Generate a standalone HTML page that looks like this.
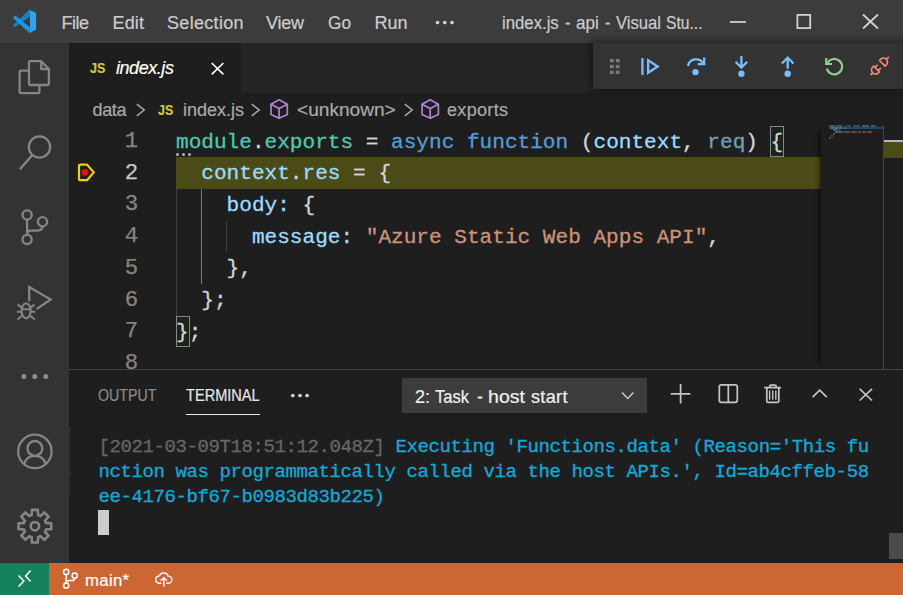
<!DOCTYPE html>
<html lang="en">
<head>
<meta charset="utf-8">
<title>index.js - api - Visual Studio Code</title>
<style>
html,body{margin:0;padding:0;}
body{width:903px;height:595px;overflow:hidden;background:#1e1e1e;position:relative;font-family:"Liberation Sans",sans-serif;}
.abs{position:absolute;}
.t{position:absolute;white-space:pre;transform-origin:0 50%;-webkit-text-stroke:0.2px;}
#titlebar{left:0;top:0;width:903px;height:43px;background:#3c3c3c;}
#activity{left:0;top:43px;width:69px;height:520px;background:#333333;}
#tabs{left:69px;top:43px;width:834px;height:50px;background:#252526;}
#tab1{left:69px;top:43px;width:171.5px;height:50.5px;background:#1e1e1e;}
#editor{left:69px;top:93px;width:834px;height:276px;background:#1e1e1e;overflow:hidden;}
#hl{left:176px;top:157px;width:645px;height:31.8px;background:#4b4b18;}
.ln{-webkit-text-stroke:0.25px;position:absolute;left:69px;width:69.3px;margin-top:-0.4px;text-align:right;font-family:"Liberation Mono",monospace;font-size:22.4px;line-height:31.68px;height:31.68px;color:#858585;white-space:pre;}
.cl{-webkit-text-stroke:0.3px;position:absolute;left:176px;font-family:"Liberation Mono",monospace;font-size:21.08px;line-height:31.68px;height:31.68px;color:#d4d4d4;white-space:pre;}
.k{color:#569cd6}.v{color:#9cdcfe}.c{color:#4ec9b0}.s{color:#ce9178}
#panelborder{left:69px;top:369px;width:834px;height:1px;background:#424242;}
#panel{left:69px;top:370px;width:834px;height:193px;background:#1e1e1e;}
#dropdown{left:402px;top:378.3px;width:244.8px;height:34.5px;background:#3c3c3c;}
#termul{left:186px;top:413.7px;width:74px;height:1.1px;background:#e7e7e7;}
.tl{-webkit-text-stroke:0.3px;letter-spacing:-0.4px;position:absolute;left:98.5px;font-family:"Liberation Mono",monospace;font-size:19px;line-height:25px;height:25px;white-space:pre;color:#13a9d9;}
.g{color:#666666}
#cursor{left:98px;top:510px;width:11px;height:25px;background:#cccccc;}
#status{left:0;top:563px;width:903px;height:32px;background:#cc6633;}
#remote{left:0;top:563px;width:48.7px;height:32px;background:#16825d;}
#dbg{left:593px;top:43px;width:310px;height:45.5px;background:#333333;box-shadow:0 0 8px 2px rgba(0,0,0,0.45);}
#minimap{left:821px;top:125px;width:62px;height:244px;background:#1e1e1e;box-shadow:-6px 0 6px -6px #000;}
#ruler{left:883px;top:125px;width:20px;height:244px;border-left:1px solid #444444;box-sizing:border-box;}
</style>
</head>
<body>
<div class="abs" id="tabs"></div>
<div class="abs" id="tab1"></div>
<div class="abs" id="editor"></div>
<div class="abs" id="hl"></div>
<div class="abs" style="left:176px;top:188.86px;width:1px;height:126.72px;background:#404040"></div>
<div class="abs" style="left:201.1px;top:188.86px;width:1.2px;height:95.04px;background:#787878"></div>
<div class="abs" style="left:226px;top:220.54px;width:1px;height:31.68px;background:#404040"></div>
<div class="abs" style="left:770.4px;top:125.9px;width:11.4px;height:28.8px;border:1px solid #888;background:rgba(0,100,0,0.1)"></div>
<div class="abs" style="left:176.3px;top:315.88px;width:11.4px;height:28.8px;border:1px solid #888;background:rgba(0,100,0,0.1)"></div>
<div class="abs" style="left:175.9px;top:152.7px;width:3px;height:3px;border-radius:50%;background:#b4b4b4"></div>
<div class="abs" style="left:181.8px;top:152.7px;width:3px;height:3px;border-radius:50%;background:#b4b4b4"></div>
<div class="abs" style="left:187.6px;top:152.7px;width:3px;height:3px;border-radius:50%;background:#b4b4b4"></div>
<div class="ln" style="top:126.50px;color:#858585">1</div>
<div class="cl" style="top:126.50px"><span class="c">module</span>.<span class="c">exports</span> = <span class="k">async</span> <span class="k">function</span> (<span class="v">context</span>, <span class="v" style="opacity:0.67">req</span>) {</div>
<div class="ln" style="top:158.18px;color:#c6c6c6">2</div>
<div class="cl" style="top:158.18px">  <span class="v">context</span>.<span class="v">res</span> = {</div>
<div class="ln" style="top:189.86px;color:#858585">3</div>
<div class="cl" style="top:189.86px">    <span class="v">body</span><span class="v">:</span> {</div>
<div class="ln" style="top:221.54px;color:#858585">4</div>
<div class="cl" style="top:221.54px">      <span class="v">message</span><span class="v">:</span> <span class="s">"Azure Static Web Apps API"</span>,</div>
<div class="ln" style="top:253.22px;color:#858585">5</div>
<div class="cl" style="top:253.22px">    },</div>
<div class="ln" style="top:284.90px;color:#858585">6</div>
<div class="cl" style="top:284.90px">  };</div>
<div class="ln" style="top:316.58px;color:#858585">7</div>
<div class="cl" style="top:316.58px">};</div>
<div class="ln" style="top:348.26px;color:#858585">8</div>
<div class="abs" id="minimap"></div>
<div class="abs" style="left:829px;top:125.1px;width:6.0px;height:1.7px;background:#4ec9b0;opacity:0.38"></div>
<div class="abs" style="left:836px;top:125.1px;width:7.0px;height:1.7px;background:#4ec9b0;opacity:0.38"></div>
<div class="abs" style="left:844.5px;top:125.1px;width:1.0px;height:1.7px;background:#d4d4d4;opacity:0.27"></div>
<div class="abs" style="left:846.5px;top:125.1px;width:4.5px;height:1.7px;background:#569cd6;opacity:0.38"></div>
<div class="abs" style="left:852.5px;top:125.1px;width:7.5px;height:1.7px;background:#569cd6;opacity:0.38"></div>
<div class="abs" style="left:861.5px;top:125.1px;width:7.5px;height:1.7px;background:#9cdcfe;opacity:0.32"></div>
<div class="abs" style="left:871px;top:125.1px;width:3.5px;height:1.7px;background:#9cdcfe;opacity:0.32"></div>
<div class="abs" style="left:876px;top:125.1px;width:1.0px;height:1.7px;background:#d4d4d4;opacity:0.27"></div>
<div class="abs" style="left:829px;top:127px;width:53.5px;height:1.9px;background:#23466c;opacity:1"></div>
<div class="abs" style="left:831px;top:127.1px;width:7.0px;height:1.7px;background:#9cdcfe;opacity:0.27"></div>
<div class="abs" style="left:839px;top:127.1px;width:3.0px;height:1.7px;background:#9cdcfe;opacity:0.27"></div>
<div class="abs" style="left:843.5px;top:127.1px;width:2.5px;height:1.7px;background:#d4d4d4;opacity:0.22"></div>
<div class="abs" style="left:833px;top:129.2px;width:5.0px;height:1.7px;background:#9cdcfe;opacity:0.32"></div>
<div class="abs" style="left:839px;top:129.2px;width:1.0px;height:1.7px;background:#d4d4d4;opacity:0.27"></div>
<div class="abs" style="left:835px;top:131.1px;width:7.5px;height:1.7px;background:#9cdcfe;opacity:0.34"></div>
<div class="abs" style="left:844.2px;top:131.1px;width:5.8px;height:1.7px;background:#ce9178;opacity:0.36"></div>
<div class="abs" style="left:851px;top:131.1px;width:6.0px;height:1.7px;background:#ce9178;opacity:0.36"></div>
<div class="abs" style="left:858px;top:131.1px;width:3.0px;height:1.7px;background:#ce9178;opacity:0.36"></div>
<div class="abs" style="left:862px;top:131.1px;width:4.0px;height:1.7px;background:#ce9178;opacity:0.36"></div>
<div class="abs" style="left:867px;top:131.1px;width:4.5px;height:1.7px;background:#ce9178;opacity:0.36"></div>
<div class="abs" style="left:833px;top:133.2px;width:2.0px;height:1.7px;background:#d4d4d4;opacity:0.27"></div>
<div class="abs" style="left:831px;top:135.2px;width:2.0px;height:1.7px;background:#d4d4d4;opacity:0.27"></div>
<div class="abs" style="left:829px;top:137.2px;width:2.0px;height:1.7px;background:#d4d4d4;opacity:0.27"></div>
<div class="abs" id="ruler"></div>
<div class="abs" style="left:884px;top:140.3px;width:19px;height:1.8px;background:#b8b8b8"></div>
<div class="abs" style="left:884px;top:142px;width:19px;height:16px;background:#4b4b18"></div>
<div class="abs" id="panel"></div>
<div class="abs" id="panelborder"></div>
<div class="abs" id="dropdown"></div>
<div class="abs" id="termul"></div>
<div class="tl" style="top:434.5px"><span class="g">[2021-03-09T18:51:12.048Z]</span> Executing 'Functions.data' (Reason='This fu</div>
<div class="tl" style="top:459.5px">nction was programmatically called via the host APIs.', Id=ab4cffeb-58</div>
<div class="tl" style="top:484.5px">ee-4176-bf67-b0983d83b225)</div>
<div class="abs" id="cursor"></div>
<div class="abs" style="left:69px;top:427px;width:2px;height:69px;background:#272727"></div>
<div class="abs" style="left:69px;top:471.6px;width:2px;height:1.6px;background:#3e3e3e"></div>
<div class="abs" style="left:889px;top:532.5px;width:14px;height:26.5px;background:#4a4a4a"></div>
<div class="abs" id="titlebar"></div>
<div class="abs" id="dbg"></div>
<div class="abs" id="activity"></div>
<div class="abs" id="status"></div>
<div class="abs" id="remote"></div>
<span class="t" style="left:61.50px;top:10.90px;font-size:18px;line-height:25px;letter-spacing:-0.498px;color:#cccccc;">File</span>
<span class="t" style="left:112.50px;top:10.90px;font-size:18px;line-height:25px;letter-spacing:0.161px;color:#cccccc;">Edit</span>
<span class="t" style="left:167.00px;top:10.90px;font-size:18px;line-height:25px;letter-spacing:0.308px;color:#cccccc;">Selection</span>
<span class="t" style="left:266.00px;top:10.90px;font-size:18px;line-height:25px;letter-spacing:-0.230px;color:#cccccc;">View</span>
<span class="t" style="left:328.00px;top:10.90px;font-size:18px;line-height:25px;letter-spacing:0.000px;color:#cccccc;transform:scaleX(0.9583);">Go</span>
<span class="t" style="left:374.50px;top:10.90px;font-size:18px;line-height:25px;letter-spacing:-0.005px;color:#cccccc;">Run</span>
<span class="t" style="left:502.27px;top:10.90px;font-size:18px;line-height:25px;letter-spacing:0.000px;color:#cccccc;transform:scaleX(0.9295);">index.js</span>
<span class="t" style="left:564.70px;top:10.90px;font-size:18px;line-height:25px;letter-spacing:0.000px;color:#cccccc;transform:scaleX(0.9333);">-</span>
<span class="t" style="left:576.10px;top:10.90px;font-size:18px;line-height:25px;letter-spacing:0.000px;color:#cccccc;transform:scaleX(0.9469);">api</span>
<span class="t" style="left:604.90px;top:10.90px;font-size:18px;line-height:25px;letter-spacing:0.000px;color:#cccccc;transform:scaleX(0.9000);">-</span>
<span class="t" style="left:615.60px;top:10.90px;font-size:18px;line-height:25px;letter-spacing:0.000px;color:#cccccc;transform:scaleX(0.9245);">Visual</span>
<span class="t" style="left:665.50px;top:10.90px;font-size:18px;line-height:25px;letter-spacing:0.000px;color:#cccccc;transform:scaleX(0.8703);">Stu...</span>
<span class="t" style="left:90.10px;top:57.00px;font-size:15.4px;line-height:22px;letter-spacing:0.000px;color:#cbcb41;font-weight:bold;transform:scaleX(0.8136);">JS</span>
<span class="t" style="left:116.00px;top:56.20px;font-size:18px;line-height:25px;letter-spacing:-0.447px;color:#ffffff;font-style:italic;">index.js</span>
<span class="t" style="left:92.50px;top:98.30px;font-size:18px;line-height:25px;letter-spacing:-0.341px;color:#a9a9a9;">data</span>
<span class="t" style="left:158.00px;top:98.90px;font-size:15.4px;line-height:22px;letter-spacing:0.000px;color:#cbcb41;font-weight:bold;transform:scaleX(0.8082);">JS</span>
<span class="t" style="left:183.00px;top:98.30px;font-size:18px;line-height:25px;letter-spacing:-0.004px;color:#a9a9a9;">index.js</span>
<span class="t" style="left:296.80px;top:98.30px;font-size:18px;line-height:25px;letter-spacing:0.000px;color:#a9a9a9;transform:scaleX(1.0609);">&lt;unknown&gt;</span>
<span class="t" style="left:447.00px;top:98.30px;font-size:18px;line-height:25px;letter-spacing:0.329px;color:#a9a9a9;">exports</span>
<span class="t" style="left:98.20px;top:384.50px;font-size:15.6px;line-height:22px;letter-spacing:0.000px;color:#8b8b8b;transform:scaleX(0.9105);">OUTPUT</span>
<span class="t" style="left:186.00px;top:384.50px;font-size:15.6px;line-height:22px;letter-spacing:0.000px;color:#e7e7e7;transform:scaleX(0.9347);">TERMINAL</span>
<span class="t" style="left:415.00px;top:384.50px;font-size:18px;line-height:25px;letter-spacing:-0.111px;color:#f0f0f0;">2:</span>
<span class="t" style="left:434.90px;top:384.50px;font-size:18px;line-height:25px;letter-spacing:0.000px;color:#f0f0f0;transform:scaleX(0.9182);">Task</span>
<span class="t" style="left:476.80px;top:384.50px;font-size:18px;line-height:25px;letter-spacing:0.000px;color:#f0f0f0;transform:scaleX(0.9833);">-</span>
<span class="t" style="left:487.61px;top:384.50px;font-size:18px;line-height:25px;letter-spacing:0.000px;color:#f0f0f0;transform:scaleX(1.0872);">host</span>
<span class="t" style="left:531.00px;top:384.50px;font-size:18px;line-height:25px;letter-spacing:0.349px;color:#f0f0f0;">start</span>
<span class="t" style="left:85.00px;top:568.90px;font-size:16.8px;line-height:24px;letter-spacing:0.307px;color:#ffffff;">main*</span>
<svg class="abs" style="left:0;top:0" width="903" height="595" viewBox="0 0 903 595" fill="none">
<polygon points="29.3,9.8 29.9,16.4 15.0,27.3 12.9,25.2" fill="#1b7fc4"/>
<polygon points="15.0,15.6 29.9,27.0 29.5,33.0 12.9,17.8" fill="#2196e6"/>
<polygon points="29.3,9.8 36.1,13.1 36.1,29.7 29.5,33 29.9,27 29.9,16.4" fill="#2da4f2"/>
<circle cx="437.5" cy="22.5" r="1.85" fill="#d0d0d0"/>
<circle cx="444.8" cy="22.5" r="1.85" fill="#d0d0d0"/>
<circle cx="452.0" cy="22.5" r="1.85" fill="#d0d0d0"/>
<g stroke="#d0d0d0" stroke-width="1.8">
<path d="M730 22 H746"/>
<rect x="797.4" y="14.9" width="12.8" height="13.2"/>
<path d="M863 14.5 L878 28.5 M878 14.5 L863 28.5"/>
</g>
<g stroke="#858585" stroke-width="2.3" fill="none" stroke-linejoin="round" stroke-linecap="butt">
<path d="M30.2 61.2 H41.2 L48.9 69 V83.8 Q48.9 85 47.7 85 H30.2 Q29 85 29 83.8 V62.4 Q29 61.2 30.2 61.2 Z M41.2 61.2 V69 H48.9"/>
<path d="M29 70.6 H20.8 Q19.6 70.6 19.6 71.8 V92 Q19.6 93.2 20.8 93.2 H38.2 Q39.4 93.2 39.4 92 V85"/>
<circle cx="39.5" cy="147" r="10.65"/><path d="M32.3 154.9 L19.9 169.2"/>
<circle cx="27.1" cy="215" r="4.6"/><circle cx="27.1" cy="239.4" r="4.6"/><circle cx="42.5" cy="221.7" r="4.6"/>
<path d="M27.1 219.6 V234.8 M42.5 226.3 C42.5 229 40.5 230.6 37.5 230.6 H31 C28.5 230.6 27.1 232 27.1 234.8"/>
<path d="M29.2 301.2 V287 L50.6 299.6 L36.6 309" stroke-linejoin="miter"/>
</g>
<g stroke="#858585" stroke-width="2" fill="none">
<ellipse cx="26.1" cy="310.8" rx="4.5" ry="7.5"/>
<path d="M21.6 309.3 H30.6 M21.7 307.6 L17.6 304.4 M21.6 311.8 H16.8 M21.9 315.8 L17.4 319.6 M30.5 307.6 L34.6 304.4 M30.6 311.8 H35.4 M30.3 315.8 L34.8 319.6"/>
</g>
<circle cx="23.9" cy="376.5" r="2.5" fill="#8c8c8c"/>
<circle cx="34.8" cy="376.5" r="2.5" fill="#8c8c8c"/>
<circle cx="45.8" cy="376.5" r="2.5" fill="#8c8c8c"/>
<g stroke="#858585" stroke-width="2.3" fill="none">
<circle cx="34.9" cy="451.4" r="16.7"/><circle cx="34.9" cy="448.4" r="7.4"/>
<path d="M24.2 464 C25.6 459 29.8 455.9 34.9 455.9 C40 455.9 44.2 459 45.6 464"/>
<path d="M31.60 515.18 L32.05 509.85 L37.75 509.85 L38.20 515.18 L40.36 516.08 L44.45 512.62 L48.48 516.65 L45.02 520.74 L45.92 522.90 L51.25 523.35 L51.25 529.05 L45.92 529.50 L45.02 531.66 L48.48 535.75 L44.45 539.78 L40.36 536.32 L38.20 537.22 L37.75 542.55 L32.05 542.55 L31.60 537.22 L29.44 536.32 L25.35 539.78 L21.32 535.75 L24.78 531.66 L23.88 529.50 L18.55 529.05 L18.55 523.35 L23.88 522.90 L24.78 520.74 L21.32 516.65 L25.35 512.62 L29.44 516.08 Z" stroke-linejoin="miter" stroke-width="2.6"/>
<circle cx="34.9" cy="526.2" r="4.2" stroke-width="2.6"/>
</g>
<path d="M211.7 63 L223.4 74.3 M223.4 63 L211.7 74.3" stroke="#ffffff" stroke-width="1.6"/>
<path d="M136.8 104.2 L144.20000000000002 110 L136.8 115.8" stroke="#a9a9a9" stroke-width="1.5"/>
<path d="M251.8 104.2 L259.2 110 L251.8 115.8" stroke="#a9a9a9" stroke-width="1.5"/>
<path d="M404.8 104.2 L412.2 110 L404.8 115.8" stroke="#a9a9a9" stroke-width="1.5"/>
<g transform="translate(0 0)" stroke="#b180d7" stroke-width="1.7" stroke-linejoin="round"><path d="M279.1 99.8 L287.3 104.3 V114.4 L279.1 118.3 L271 114.4 V104.3 Z M271 104.3 L279.1 108.4 L287.3 104.3 M279.1 108.4 V118.3"/></g>
<g transform="translate(151.1 0)" stroke="#b180d7" stroke-width="1.7" stroke-linejoin="round"><path d="M279.1 99.8 L287.3 104.3 V114.4 L279.1 118.3 L271 114.4 V104.3 Z M271 104.3 L279.1 108.4 L287.3 104.3 M279.1 108.4 V118.3"/></g>
<path d="M80.5 164.6 H87 L93.8 172.4 L87 180.2 H80.5 Q79 180.2 79 178.7 V166.1 Q79 164.6 80.5 164.6 Z" stroke="#ffcc00" stroke-width="2.2" stroke-linejoin="round"/>
<circle cx="85.1" cy="172.4" r="3.3" fill="#e51400"/>
<rect x="609.9" y="59.0" width="3.8" height="3.3" fill="#7a7a7a"/>
<rect x="609.9" y="64.9" width="3.8" height="3.3" fill="#7a7a7a"/>
<rect x="609.9" y="70.7" width="3.8" height="3.3" fill="#7a7a7a"/>
<rect x="615.8" y="59.0" width="3.8" height="3.3" fill="#7a7a7a"/>
<rect x="615.8" y="64.9" width="3.8" height="3.3" fill="#7a7a7a"/>
<rect x="615.8" y="70.7" width="3.8" height="3.3" fill="#7a7a7a"/>
<g stroke="#75beff" stroke-width="2.3" fill="none">
<path d="M642.4 58 V74.9"/><path d="M648.1 60.3 L657.7 66.5 L648.1 72.8 Z" stroke-linejoin="miter"/>
<path d="M688 66 A8.3 8.3 0 0 1 703.4 63.6"/><path d="M704.2 57.5 V64.2 H697.7"/>
<path d="M741.4 56 V67.2 M735.6 61.8 L741.4 67.6 L747.2 61.8"/>
<path d="M787.7 68.8 V57.8 M781.9 63.5 L787.7 57.6 L793.5 63.5"/>
</g>
<circle cx="695.5" cy="72.1" r="3.2" fill="#75beff"/>
<circle cx="741.4" cy="73.7" r="3.2" fill="#75beff"/>
<circle cx="787.7" cy="73.75" r="3.2" fill="#75beff"/>
<g stroke="#89d185" stroke-width="2.2" fill="none"><path d="M827.6 63 A7.7 7.7 0 1 1 826.9 68.4"/><path d="M826.2 57.9 V64 H832"/></g>
<g transform="translate(879.6 66) rotate(-45)" stroke="#f48771" stroke-width="1.7" fill="none" stroke-linejoin="round"><path d="M3.8 -4 H5.5 A4 4 0 0 1 5.5 4 H3.8 Z M9.5 0 H13"/><path d="M-4.3 -4 H-5.7 A4 4 0 0 0 -5.7 4 H-4.3 Z M-9.7 0 H-13 M-4.3 -2.3 H-0.5 M-4.3 2.3 H-0.5"/></g>
<path d="M622 392.5 L627.75 398.4 L633.5 392.5" stroke="#cccccc" stroke-width="1.5"/>
<circle cx="292.8" cy="395.5" r="1.85" fill="#d0d0d0"/>
<circle cx="300" cy="395.5" r="1.85" fill="#d0d0d0"/>
<circle cx="307.1" cy="395.5" r="1.85" fill="#d0d0d0"/>
<g stroke="#c5c5c5" stroke-width="1.7" fill="none">
<path d="M680.6 384 V403.6 M670.8 393.8 H690.4"/>
<rect x="719.3" y="384.9" width="18" height="17.4" rx="2"/><path d="M728.3 384.9 V402.3"/>
<path d="M764.2 387.7 H780.9 M769.6 387.7 V386.6 Q769.6 385.2 771 385.2 H774.8 Q776.2 385.2 776.2 386.6 V387.7 M766.8 387.7 V400.9 Q766.8 402.4 768.3 402.4 H777.3 Q778.8 402.4 778.8 400.9 V387.7"/>
<path d="M769.6 390.4 V399.7 M772.7 390.4 V399.7 M775.8 390.4 V399.7" stroke-width="1.4"/>
<path d="M812.6 397.2 L819.7 390.2 L826.8 397.2"/>
<path d="M859.6 388.9 L872 400.5 M872 388.9 L859.6 400.5"/>
</g>
<g stroke="#ffffff" stroke-width="1.5" fill="none">
<path d="M18.6 575.4 L23.9 580.9 L18.6 586.5 M30.6 570.5 L25.6 576 L30.6 581.6"/>
<circle cx="66.2" cy="571.9" r="2.6"/><circle cx="66.2" cy="585.5" r="2.6"/><circle cx="74.7" cy="575.6" r="2.6"/>
<path d="M66.2 574.5 V582.9 M74.7 578.2 C74.7 580 73.4 580.6 71.8 580.6 H69 C67.2 580.6 66.2 581.4 66.2 582.9"/>
<path stroke-width="1.35" d="M161.4 583.2 H158.6 A3.7 3.7 0 0 1 159.3 575.9 A4.7 4.7 0 0 1 168.2 576.2 A3.5 3.5 0 0 1 168.6 583.2 H166.2"/>
<path d="M163.8 586.8 V578 M160.6 580.7 L163.8 577.8 L167 580.7"/>
</g>
</svg>
</body>
</html>
